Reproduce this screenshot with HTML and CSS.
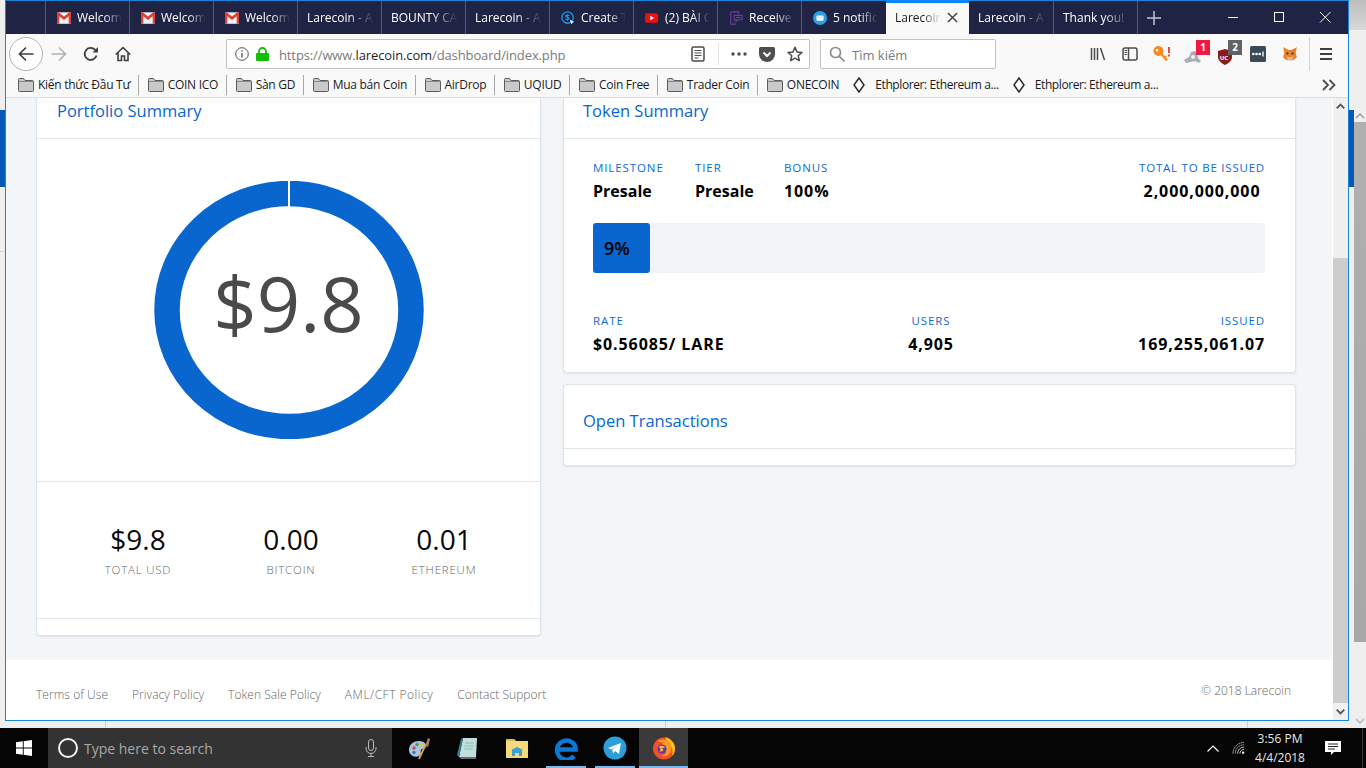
FILE: index.html
```html
<!DOCTYPE html>
<html lang="en">
<head>
<meta charset="utf-8">
<title>Larecoin</title>
<link rel="stylesheet" href="styles.css">
</head>
<body>
<svg class="defs" width="0" height="0" aria-hidden="true">
  <symbol id="folder" viewBox="0 0 16 14">
    <path d="M.5 3V1.500a1 1 0 0 1 1-1h4l1.500 2h7.500a1 1 0 0 1 1 1v9a1 1 0 0 1-1 1h-13a1 1 0 0 1-1-1z" fill="#c9c9c9" stroke="#5c5c5c"/>
    <path d="M1 3.500h14" stroke="#8a8a8a"/>
  </symbol>
  <symbol id="diamond" viewBox="0 0 12 16">
    <path d="M6 1l5 7-5 7-5-7z" fill="#fff" stroke="#2c2c2c" stroke-width="1.500"/>
  </symbol>
  <symbol id="gmail" viewBox="0 0 14 12">
    <rect width="14" height="11.500" y=".3" fill="#f1f1f1"/>
    <path d="M0 .3h1.800L7 4.600 12.200.3H14v11.500h-2.300V4.200L7 8 2.300 4.200v7.600H0z" fill="#d9443a"/>
  </symbol>
</svg>

<div class="desktop">
  <svg class="ghost-arrow ghost-up" viewBox="0 0 12 8"><path d="M2 6l4-4 4 4" fill="none" stroke="#9a9a9a" stroke-width="1.500"/></svg>
  <svg class="ghost-arrow ghost-down" viewBox="0 0 12 8"><path d="M2 2l4 4 4-4" fill="none" stroke="#b5b5b5" stroke-width="1.500"/></svg>
  <div class="window">
    <header class="tabbar">
      <div class="tab"><svg class="fav"><use href="#gmail"/></svg><span class="tab-label">Welcome</span></div>
      <div class="tab"><svg class="fav"><use href="#gmail"/></svg><span class="tab-label">Welcome</span></div>
      <div class="tab"><svg class="fav"><use href="#gmail"/></svg><span class="tab-label">Welcome</span></div>
      <div class="tab tab-plain"><span class="tab-label">Larecoin - A</span></div>
      <div class="tab tab-plain"><span class="tab-label">BOUNTY CA</span></div>
      <div class="tab tab-plain"><span class="tab-label">Larecoin - A</span></div>
      <div class="tab">
        <svg class="fav" viewBox="0 0 16 16"><circle cx="7.500" cy="7.500" r="6.500" fill="none" stroke="#1c97e8" stroke-width="1.500"/><text x="7.500" y="11" text-anchor="middle" class="fav-dollar">$</text><path d="M10 10l5 2.500-2 .8-.8 2z" fill="#fff"/></svg>
        <span class="tab-label">Create T</span>
      </div>
      <div class="tab">
        <svg class="fav" viewBox="0 0 16 16"><rect y="2.500" width="15" height="11" rx="2.500" fill="#ee0f0f"/><path d="M6 5.500l4.500 2.500L6 10.500z" fill="#fff"/></svg>
        <span class="tab-label">(2) BÀI G</span>
      </div>
      <div class="tab">
        <svg class="fav" viewBox="0 0 16 16" fill="none" stroke="#6b3fa0" stroke-width="1.300"><path d="M2 1h9v3M2 1v14h6M5 12.500h1"/><path d="M6 5h9v5h-5l-2 2v-2H6z"/><path d="M8 7.500h5"/></svg>
        <span class="tab-label">Receive</span>
      </div>
      <div class="tab">
        <svg class="fav" viewBox="0 0 16 16"><circle cx="8" cy="8" r="8" fill="#2b9fe3"/><rect x="4" y="5" width="8" height="6" rx="1" fill="#fff"/><path d="M4.500 5.800L8 8.300l3.500-2.500" fill="none" stroke="#8cc9ee" stroke-width=".8"/></svg>
        <span class="tab-label">5 notific</span>
      </div>
      <div class="tab tab-active">
        <span class="tab-label">Larecoin</span>
        <svg class="tab-close" viewBox="0 0 12 12"><path d="M1 1l10 10M11 1L1 11" stroke="#3d3d3d" stroke-width="1.500"/></svg>
      </div>
      <div class="tab tab-plain tab-next"><span class="tab-label">Larecoin - A</span></div>
      <div class="tab tab-plain"><span class="tab-label">Thank you! -</span></div>
      <div class="tab-end">
        <svg class="tab-plus" viewBox="0 0 14 14"><path d="M7 0v14M0 7h14" stroke="#c5c6d2" stroke-width="1.500"/></svg>
      </div>
      <div class="win-controls">
        <svg class="win-btn" viewBox="0 0 46 32"><path d="M18 16.500h10" stroke="#fff"/></svg>
        <svg class="win-btn" viewBox="0 0 46 32"><rect x="18.500" y="11.500" width="9" height="9" fill="none" stroke="#fff"/></svg>
        <svg class="win-btn" viewBox="0 0 46 32"><path d="M18 11l10.500 10.500M28.500 11L18 21.500" stroke="#fff"/></svg>
      </div>
    </header>

    <nav class="toolbar">
      <div class="back-btn">
        <svg class="ico16" viewBox="0 0 16 16" fill="none" stroke="#3e3e3e" stroke-width="1.700"><path d="M1.500 8h14M8 1.500L1.500 8 8 14.500"/></svg>
      </div>
      <div class="slot"><svg class="ico16" viewBox="0 0 16 16" fill="none" stroke="#b3b3b3" stroke-width="1.700"><path d="M14.500 8H.5M8 1.500L14.500 8 8 14.500"/></svg></div>
      <div class="slot"><svg class="ico16" viewBox="0 0 16 16" fill="none" stroke="#3e3e3e" stroke-width="1.800"><path d="M13.500 9.500A6 6 0 1 1 12 3.700L14 5.500"/><path d="M15 1v5.500H9.500z" fill="#3e3e3e" stroke="none"/></svg></div>
      <div class="slot"><svg class="ico16" viewBox="0 0 16 16" fill="none" stroke="#3e3e3e" stroke-width="1.600"><path d="M.8 8.500L8 1.500l7.200 7M3 7v7.500h3.500V10h3v4.500H13V7"/></svg></div>

      <div class="urlbar">
        <svg class="url-info" viewBox="0 0 14 14" fill="none" stroke="#555"><circle cx="7" cy="7" r="6.300"/><path d="M7 6v4.500M7 3.300v1.400" stroke-width="1.300"/></svg>
        <svg class="url-lock" viewBox="0 0 13 14"><path d="M3 6.500V4.500a3.500 3.500 0 0 1 7 0v2" fill="none" stroke="#12bc00" stroke-width="1.800"/><rect y="6" width="13" height="8" rx="1" fill="#12bc00"/></svg>
        <span class="url-text">https://www.<b class="url-host">larecoin.com</b>/dashboard/index.php</span>
        <svg class="url-reader" viewBox="0 0 14 16" fill="none" stroke="#4b4b4b"><rect x="1" y="1" width="12" height="14" rx="1.500" stroke-width="1.500"/><path d="M3.500 4.500h7M3.500 7h7M3.500 9.500h7M3.500 12h4"/></svg>
        <span class="url-sep"></span>
        <svg class="url-dots" viewBox="0 0 16 4"><circle cx="2" cy="2" r="1.700" fill="#4b4b4b"/><circle cx="8" cy="2" r="1.700" fill="#4b4b4b"/><circle cx="14" cy="2" r="1.700" fill="#4b4b4b"/></svg>
        <svg class="url-pocket" viewBox="0 0 16 15"><path d="M1.500 0h13A1.500 1.500 0 0 1 16 1.500V7A8 8 0 0 1 0 7V1.500A1.500 1.500 0 0 1 1.500 0z" fill="#4f4f4f"/><path d="M4.500 5.500L8 9l3.500-3.500" fill="none" stroke="#f9f9fa" stroke-width="2"/></svg>
        <svg class="url-star" viewBox="0 0 16 16"><path d="M8 1.300l2 4.600 5 .5-3.800 3.300 1.100 4.900L8 12.100l-4.300 2.500 1.100-4.900L1 6.400l5-.5z" fill="none" stroke="#4b4b4b" stroke-width="1.500" stroke-linejoin="round"/></svg>
      </div>

      <div class="searchbar">
        <svg class="search-ico" viewBox="0 0 16 16" fill="none" stroke="#8c8c8c" stroke-width="1.700"><circle cx="6.500" cy="6.500" r="5"/><path d="M10.300 10.300L15.500 15.500"/></svg>
        <span class="search-text">Tìm kiếm</span>
      </div>

      <div class="slot slot-first"><svg class="ico16" viewBox="0 0 16 16" fill="none" stroke="#4b4b4b" stroke-width="1.500"><path d="M1.500 2v12M4.500 2v12M7.500 2v12M10.500 2l4 12"/></svg></div>
      <div class="slot"><svg class="ico16" viewBox="0 0 16 14" fill="none" stroke="#4b4b4b" stroke-width="1.500"><rect x="1" y="1" width="14" height="12" rx="2"/><path d="M6.500 1v12"/><path d="M2.500 3.500h2.500M2.500 5.500h2.500M2.500 7.500h2.500" stroke-width="1"/></svg></div>
      <div class="slot"><svg class="ico18" viewBox="0 0 18 18"><path fill-rule="evenodd" d="M5.500 1a5 5 0 1 1-.1 10 5 5 0 0 1 .1-10zM4 4a1.300 1.300 0 1 0 .1 2.600A1.300 1.300 0 0 0 4 4z" fill="#f68a1e"/><path d="M8 8.500l6 7" stroke="#f68a1e" stroke-width="2.400"/><path d="M11.500 12.500l2-1.500" stroke="#f68a1e" stroke-width="1.500"/><path d="M16 2v6M16 9.500v2" stroke="#e0312a" stroke-width="1.700"/></svg></div>
      <div class="slot">
        <svg class="ico-addon" viewBox="0 0 18 14" fill="#a7adb8"><path d="M0 10l5-3 2-5 4-1 2 2 1 5 3 3-2 2-4-2-4 1-5 1z"/><circle cx="9" cy="7" r="2" fill="#f0f0f0"/></svg>
        <span class="badge badge-red">1</span>
      </div>
      <div class="slot">
        <svg class="ico-shield" viewBox="0 0 14 16"><path d="M7 0l7 2v6c0 3.500-3 6-7 8-4-2-7-4.500-7-8V2z" fill="#8b1a1a"/><text x="6" y="10.500" text-anchor="middle" class="ub-text">UC</text></svg>
        <span class="badge badge-gray">2</span>
      </div>
      <div class="slot"><svg class="ico16" viewBox="0 0 16 16"><rect width="16" height="16" rx="1.500" fill="#3b4a56"/><circle cx="3.300" cy="8" r="1.300" fill="#fff"/><circle cx="6.500" cy="8" r="1.300" fill="#fff"/><circle cx="9.700" cy="8" r="1.300" fill="#fff"/><path d="M13 5.500v5" stroke="#fff" stroke-width="1.300"/></svg></div>
      <div class="slot"><svg class="ico16" viewBox="0 0 14 14"><path d="M1 1l5 2.500h2L13 1l-1 5 1 4-3 2.500H4L1 10l1-4z" fill="#e8832a"/><path d="M4 9l3 1 3-1-1 3H5z" fill="#d7c1b3"/><circle cx="4.800" cy="6.500" r=".9" fill="#3a2a20"/><circle cx="9.200" cy="6.500" r=".9" fill="#3a2a20"/></svg></div>
      <span class="tool-sep"></span>
      <div class="slot"><svg class="ico16" viewBox="0 0 16 16"><path d="M2 3h12M2 8h12M2 13h12" stroke="#3e3e3e" stroke-width="1.800"/></svg></div>
    </nav>

    <div class="bookmarks">
      <a class="bm bm-sep"><svg class="bm-folder"><use href="#folder"/></svg>Kiến thức Đầu Tư</a>
      <a class="bm bm-sep"><svg class="bm-folder"><use href="#folder"/></svg>COIN ICO</a>
      <a class="bm bm-sep"><svg class="bm-folder"><use href="#folder"/></svg>Sàn GD</a>
      <a class="bm bm-sep"><svg class="bm-folder"><use href="#folder"/></svg>Mua bán Coin</a>
      <a class="bm bm-sep"><svg class="bm-folder"><use href="#folder"/></svg>AirDrop</a>
      <a class="bm bm-sep"><svg class="bm-folder"><use href="#folder"/></svg>UQIUD</a>
      <a class="bm bm-sep"><svg class="bm-folder"><use href="#folder"/></svg>Coin Free</a>
      <a class="bm bm-sep"><svg class="bm-folder"><use href="#folder"/></svg>Trader Coin</a>
      <a class="bm"><svg class="bm-folder"><use href="#folder"/></svg>ONECOIN</a>
      <a class="bm bm-eth"><svg class="bm-diamond"><use href="#diamond"/></svg>Ethplorer: Ethereum a...</a>
      <a class="bm bm-eth"><svg class="bm-diamond"><use href="#diamond"/></svg>Ethplorer: Ethereum a...</a>
      <svg class="bm-more" viewBox="0 0 14 12" fill="none" stroke="#4b4b4b" stroke-width="1.800"><path d="M1 1l5 5-5 5M7.500 1l5 5-5 5"/></svg>
    </div>

    <div class="viewport">
      <div class="page">
        <main class="content">
          <section class="card card-left">
            <h2 class="card-title">Portfolio Summary</h2>
            <div class="donut-wrap">
              <svg class="donut" viewBox="0 0 270 258">
                <ellipse cx="135" cy="129" rx="122" ry="116.500" fill="none" stroke="#0866ce" stroke-width="25.500"/>
                <rect x="134" y="0" width="2" height="27" fill="#fff"/>
              </svg>
              <div class="donut-value">$9.8</div>
            </div>
            <div class="stats">
              <div class="stat"><div class="stat-num">$9.8</div><div class="stat-label">TOTAL USD</div></div>
              <div class="stat"><div class="stat-num">0.00</div><div class="stat-label">BITCOIN</div></div>
              <div class="stat"><div class="stat-num">0.01</div><div class="stat-label">ETHEREUM</div></div>
            </div>
            <div class="card-foot"></div>
          </section>

          <div class="col-right">
            <section class="card">
              <h2 class="card-title">Token Summary</h2>
              <div class="token-body">
                <div class="row-top">
                  <div class="field f-milestone"><div class="lbl">MILESTONE</div><div class="val">Presale</div></div>
                  <div class="field f-tier"><div class="lbl">TIER</div><div class="val">Presale</div></div>
                  <div class="field"><div class="lbl">BONUS</div><div class="val val-num">100%</div></div>
                  <div class="field f-total"><div class="lbl">TOTAL TO BE ISSUED</div><div class="val val-num">2,000,000,000</div></div>
                </div>
                <div class="progress"><div class="progress-fill">9%</div></div>
                <div class="row-bottom">
                  <div class="field"><div class="lbl">RATE</div><div class="val val-num">$0.56085/ LARE</div></div>
                  <div class="field f-users"><div class="lbl">USERS</div><div class="val val-num">4,905</div></div>
                  <div class="field f-issued"><div class="lbl">ISSUED</div><div class="val val-num">169,255,061.07</div></div>
                </div>
              </div>
            </section>
            <section class="card card-open">
              <h2 class="card-title card-title-open">Open Transactions</h2>
              <div class="card-foot"></div>
            </section>
          </div>
        </main>
        <footer class="site-foot">
          <div class="foot-links">
            <a>Terms of Use</a><a>Privacy Policy</a><a>Token Sale Policy</a><a class="foot-aml">AML/CFT Policy</a><a>Contact Support</a>
          </div>
          <div class="foot-copy">© 2018 Larecoin</div>
        </footer>
      </div>
      <div class="scrollbar">
        <svg class="sb-arrow" viewBox="0 0 16 16"><path d="M4 10l4-4 4 4" fill="none" stroke="#555" stroke-width="2"/></svg>
        <div class="sb-gap"></div>
        <div class="sb-thumb"></div>
        <svg class="sb-arrow" viewBox="0 0 16 16"><path d="M4 6l4 4 4-4" fill="none" stroke="#555" stroke-width="2"/></svg>
      </div>
    </div>
  </div>

  <div class="taskbar">
    <div class="start">
      <svg class="win-logo" viewBox="0 0 16 16"><path d="M0 2.300l6.800-1v6.300H0zM7.700 1.200L16 0v7.600H7.700zM0 8.400h6.800v6.300l-6.800-1zM7.700 8.400H16V16l-8.300-1.200z" fill="#fff"/></svg>
    </div>
    <div class="tb-search">
      <span class="cortana"></span>
      <span class="tb-search-text">Type here to search</span>
      <svg class="tb-mic" viewBox="0 0 12 18" fill="none" stroke="#bbb"><rect x="3.500" y=".5" width="5" height="11" rx="2.500"/><path d="M1 8v1.500a5 5 0 0 0 10 0V8M6 14.500V17M3 17.500h6"/></svg>
    </div>
    <div class="tb-app">
      <svg class="tb-ico" viewBox="0 0 24 24"><path d="M2 14c0-6 5-9 10-9 5 0 8 3 7 6-1 2-4 1-5 3s1 4-2 6c-5 2-10-1-10-6z" fill="#a9c6de"/><circle cx="7" cy="12" r="1.700" fill="#d9443a"/><circle cx="10" cy="8.500" r="1.700" fill="#3fa34d"/><circle cx="14.500" cy="8.500" r="1.700" fill="#e8c32a"/><circle cx="7" cy="16.500" r="1.700" fill="#3c78d8"/><path d="M12 23l6-13" stroke="#e2a24a" stroke-width="1.800"/><path d="M18 10l3-8 2 1-2 8z" fill="#b5804a"/></svg>
    </div>
    <div class="tb-app">
      <svg class="tb-ico" viewBox="0 0 24 24"><path d="M7 2h14l-1 19H3z" fill="#bfe0dc"/><path d="M7 2L3 21l-2-2L5 3z" fill="#3b7f86"/><path d="M20 21h-17l2 2h15z" fill="#6d6d6d"/><path d="M9 7h9M8.500 10h9M8 13h9" stroke="#8fbab6"/></svg>
    </div>
    <div class="tb-app">
      <svg class="tb-ico" viewBox="0 0 24 24"><path d="M1 3h8l2 2h12v17H1z" fill="#f6d978"/><path d="M1 3h8l1 2H1z" fill="#e3b94c"/><path d="M7 20v-6h10v6h-3v-3h-4v3z" fill="#3aa0e0"/><path d="M6 14l6-3 6 3z" fill="#3aa0e0"/></svg>
    </div>
    <div class="tb-app tb-open">
      <svg class="tb-ico" viewBox="0 0 24 24" fill="none"><path d="M4 13.500h17.500V11A9.500 9.500 0 1 0 20 20" stroke="#0a78d7" stroke-width="4.500"/></svg>
    </div>
    <div class="tb-app tb-open">
      <svg class="tb-ico" viewBox="0 0 24 24"><circle cx="12" cy="12" r="11.500" fill="#2a9fd9"/><path d="M5 12l13-5-2 11-4-3-2 2.500-.6-4L16 9l-7.500 4.500z" fill="#fff"/></svg>
    </div>
    <div class="tb-app tb-active">
      <svg class="tb-ico" viewBox="0 0 24 24"><circle cx="12" cy="12.500" r="11" fill="#f2502a"/><path d="M13 1c6 2 10 6 10 11.500 0 3-1 5.500-3 7.500 1-3 1-7-1-10-1.500-2.500-4-5-6-9z" fill="#ffc21c"/><path d="M6 5c5-3 11-1 13 4 1 3 0 8-3 10-2 1.500-5 1.500-7 .5 3 0 6-2 5-5-1-2-3-2-5-2 0-3 1-5 3-6-2 0-4 0-6-1.500z" fill="#ff9a1f"/><circle cx="10" cy="13" r="4.500" fill="#5a35b5"/><path d="M7 10.500c2-1 5-1 6 1l-3 .8 1.500 2c-1 1.500-3 1.700-4.500.7 1.500 0 2-1.500 1-2.500z" fill="#ffb52c"/></svg>
    </div>
    <div class="tray">
      <svg class="tray-chev" viewBox="0 0 12 7"><path d="M.5 6.500L6 1l5.500 5.500" fill="none" stroke="#fff" stroke-width="1.200"/></svg>
      <svg class="tray-wifi" viewBox="0 0 14 14" fill="none" stroke="#d0d0d0"><path d="M1 13A12 12 0 0 1 13 1M3.500 13A9.500 9.500 0 0 1 13 3.500" stroke-dasharray="1.500 .7"/><path d="M6 13a7 7 0 0 1 7-7M8.500 13A4.500 4.500 0 0 1 13 8.500"/><circle cx="12" cy="12" r="1.300" fill="#fff" stroke="none"/></svg>
      <div class="clock"><div>3:56 PM</div><div>4/4/2018</div></div>
      <svg class="tray-note" viewBox="0 0 16 15"><path d="M0 0h16v11h-7l-3 3v-3H0z" fill="#fff"/><path d="M3 3h10M3 5.500h10M3 8h7" stroke="#222"/></svg>
      <span class="tray-edge"></span>
    </div>
  </div>
</div>
</body>
</html>
```

FILE: styles.css
```css
* { box-sizing: border-box; }
html, body { margin: 0; padding: 0; height: 100%; overflow: hidden; }
body { font-family: "Open Sans", "Noto Sans", sans-serif; color: #000; }
.defs { display: block; height: 0; }
a { color: inherit; text-decoration: none; }

/* desktop: what shows around the browser window */
.desktop {
  position: relative;
  width: 1366px; height: 768px;
  display: flex; flex-direction: column;
  padding: 0 17px 0 5px;
  background-color: #efefef;
  background-image:
    linear-gradient(#0659b3, #0659b3),
    linear-gradient(#0659b3, #0659b3),
    linear-gradient(#b0b0b0, #a8a8a8),
    linear-gradient(#bdbdbd, #d8d8d8),
    linear-gradient(#d6d6d6, #d6d6d6),
    linear-gradient(#d0d0d0, #d0d0d0),
    linear-gradient(#d0d0d0, #d0d0d0),
    linear-gradient(#d0d0d0, #d0d0d0);
  background-repeat: no-repeat;
  background-size: 5px 77px, 5px 77px, 12px 520px, 17px 30px, 5px 1px, 1px 7px, 1px 7px, 1px 7px;
  background-position: 0 110px, 1349px 110px, 1354px 122px, 1349px 0, 0 251px, 105px 721px, 665px 721px, 1247px 721px;
}
.ghost-arrow { position: absolute; left: 1354px; width: 12px; height: 8px; }
.ghost-up { top: 112px; }
.ghost-down { top: 717px; }

.window {
  height: 721px;
  border: 1px solid #1a84d8;
  display: flex; flex-direction: column;
  background: #f9f9fa;
  margin-bottom: 7px;
  flex: none;
}

/* tab strip */
.tabbar {
  height: 33px; flex: none;
  display: flex;
  background: #1f2344;
  padding-left: 39px;
  color: #fff;
  font-size: 12px;
}
.tab {
  width: 84px;
  display: flex; align-items: center; gap: 6px;
  padding: 0 7px 0 11px;
  border-left: 1px solid #565a77;
}
.tab-plain { padding-left: 9px; }
.fav { width: 14px; height: 14px; flex: none; }
.fav-dollar { font: 700 10px "Open Sans", sans-serif; fill: #1c97e8; }
.tab-label {
  flex: 1; min-width: 0;
  white-space: nowrap; overflow: hidden;
  -webkit-mask-image: linear-gradient(90deg, #000 60%, transparent 100%);
  mask-image: linear-gradient(90deg, #000 60%, transparent 100%);
}
.tab-active {
  width: 83px;
  margin: -1px 0 0 1px;
  background: #f9f9fa; color: #1a1a1a;
  border-left: 0; border-top: 3px solid #0a84ff;
  padding: 0 11px 3px 9px;
}
.tab-next { border-left: 0; }
.tab-close { width: 11px; height: 11px; flex: none; }
.tab-end {
  width: 46px; flex: none;
  display: flex; align-items: center; justify-content: center;
  border-left: 1px solid #565a77;
  padding-right: 13px;
}
.tab-plus { width: 14px; height: 14px; }
.win-controls { margin-left: auto; display: flex; }
.win-btn { width: 46px; height: 32px; display: block; }

/* nav toolbar */
.toolbar {
  height: 38px; flex: none;
  display: flex; align-items: center;
  padding: 2px 3px 0 3px;
  background: #f9f9fa;
}
.back-btn {
  width: 34px; height: 34px; flex: none;
  border: 1px solid #b3b3b3; border-radius: 50%;
  background: #fff;
  display: flex; align-items: center; justify-content: center;
}
.slot {
  width: 32px; height: 32px; flex: none;
  display: flex; align-items: center; justify-content: center;
  position: relative;
}
.ico16 { width: 16px; height: 16px; }
.ico18 { width: 18px; height: 18px; }
.ico-addon { width: 18px; height: 14px; margin: 6px 2px 0 0; }
.ico-shield { width: 14px; height: 16px; margin: 6px 3px 0 0; }
.slot-first { margin-left: 86px; }
.badge {
  position: absolute; top: 2px; left: 18px;
  width: 14px; height: 15px;
  font-size: 10px; font-weight: 700; line-height: 15px; text-align: center;
  color: #fff;
}
.badge-red { background: #f0193f; }
.badge-gray { background: #5f6368; }
.ub-text { font: 700 6px "Open Sans", sans-serif; fill: #fff; }
.tool-sep { width: 1px; height: 34px; background: #d4d4d6; margin-left: 3px; flex: none; }

.urlbar, .searchbar {
  height: 30px; flex: none;
  background: #fff;
  border: 1px solid #c2c2c4; border-radius: 2px;
  display: flex; align-items: center;
}
.urlbar { width: 584px; margin-left: 87px; padding-left: 8px; }
.url-info { width: 14px; height: 14px; flex: none; }
.url-lock { width: 13px; height: 14px; flex: none; margin-left: 7px; }
.url-text {
  margin-left: 10px; padding-top: 1px;
  font-size: 13px; color: #7b7b7b; white-space: nowrap;
  letter-spacing: -.12px; flex: 1;
}
.url-host { font-weight: 400; color: #1f1f1f; }
.url-reader { width: 14px; height: 16px; flex: none; margin-right: 13px; }
.url-sep { width: 1px; height: 22px; background: #e0e0e0; flex: none; }
.url-dots { width: 16px; height: 4px; flex: none; margin-left: 12px; }
.url-pocket { width: 16px; height: 15px; flex: none; margin-left: 12px; }
.url-star { width: 16px; height: 16px; flex: none; margin: 0 6px 0 12px; }
.searchbar { width: 176px; margin-left: 10px; padding-left: 8px; }
.search-ico { width: 16px; height: 16px; flex: none; }
.search-text { margin-left: 7px; padding-top: 1px; font-size: 13px; color: #7b7b7b; }

/* bookmarks */
.bookmarks {
  height: 26px; flex: none;
  display: flex; align-items: center;
  padding: 0 0 0 12px;
  font-size: 12px; color: #1a1a1a;
  border-bottom: 1px solid #dcdcde;
  letter-spacing: -.27px;
  white-space: nowrap;
}
.bm { display: flex; align-items: center; gap: 4px; }
.bm-sep { padding-right: 8px; border-right: 1px solid #a8a8a8; margin-right: 8.500px; height: 20px; }
.bm-folder { width: 16px; height: 14px; flex: none; }
.bm-diamond { width: 12px; height: 16px; flex: none; }
.bm-eth { margin-left: 14px; gap: 10px; letter-spacing: -.4px; }
.bm-more { width: 14px; height: 12px; margin-left: auto; margin-right: 12px; }

/* page */
.viewport { flex: 1; min-height: 0; display: flex; }
.page { flex: 1; min-width: 0; display: flex; flex-direction: column; background: #f3f6f9; }
.content {
  flex: 1; min-height: 0;
  display: flex; align-items: flex-start; gap: 22px;
  padding-left: 30px;
}
.card {
  background: #fff;
  border: solid #dfe3ea; border-width: 0 1px 1px 1px;
  border-radius: 0 0 4px 4px;
  box-shadow: 0 1px 2px rgba(90, 100, 120, .12);
}
.card-left { width: 505px; }
.col-right { width: 733px; display: flex; flex-direction: column; gap: 11px; }
.card-title {
  margin: 0;
  height: 41px;
  padding: 0 0 15px 20px;
  display: flex; align-items: flex-end;
  font-size: 16.500px; font-weight: 400; line-height: 24px;
  color: #0866ce;
  border-bottom: 1px solid #dfe3ea;
}
.col-right .card-title { padding-left: 19px; }
.card-open { border-width: 1px; border-radius: 4px; }
.col-right .card-title-open { height: 64px; padding-bottom: 15px; }
.card-foot { height: 16px; }

.donut-wrap {
  height: 343px;
  display: grid; place-items: center;
  border-bottom: 1px solid #dfe3ea;
}
.donut { grid-area: 1 / 1; width: 270px; height: 258px; }
.donut-value {
  grid-area: 1 / 1;
  font-size: 76px; font-weight: 400; color: #4a4a4a; line-height: 1;
  padding-bottom: 14px;
}
.stats {
  height: 137px;
  display: grid; grid-template-columns: repeat(3, 153px);
  justify-content: center;
  padding: 38px 0 0 5px;
  border-bottom: 1px solid #dfe3ea;
}
.stat { text-align: center; }
.stat-num { font-size: 28px; line-height: 38px; color: #0a0a0a; }
.stat-label { font-size: 11.500px; font-weight: 300; letter-spacing: .8px; color: #666; line-height: 16px; margin-top: 4px; }

.token-body { padding: 21px 30px 17px 29px; height: 233px; }
.row-top { display: flex; }
.row-bottom { display: grid; grid-template-columns: 1fr auto 1fr; margin-top: 40px; }
.field { min-width: 0; }
.lbl { font-size: 11.500px; line-height: 16px; letter-spacing: .9px; color: #0d6bd6; white-space: nowrap; }
.val { font-size: 16px; font-weight: 700; line-height: 22px; margin-top: 4px; white-space: nowrap; }
.val-num { letter-spacing: .9px; }
.f-milestone { width: 102px; }
.f-tier { width: 89px; }
.f-total { margin-left: auto; text-align: center; }
.f-total .lbl { letter-spacing: .78px; }
.f-users { text-align: center; padding-left: 4px; }
.f-issued { text-align: right; }
.progress {
  margin-top: 21px; height: 50px;
  background: #f1f3f8; border-radius: 3px;
}
.progress-fill {
  width: 57px; height: 50px;
  background: #0866ce; border-radius: 3px;
  display: flex; align-items: center;
  padding-left: 11px;
  font-size: 18px; font-weight: 600;
}

.site-foot {
  height: 60px; flex: none;
  background: #fff;
  display: flex; justify-content: space-between; align-items: flex-start;
  padding: 0 41px 0 30px;
  font-size: 12px; font-weight: 300; color: #666;
}
.foot-links { display: flex; gap: 24px; padding-top: 26px; letter-spacing: .05px; }
.foot-aml { letter-spacing: .5px; }
.foot-copy { padding-top: 22px; }

.scrollbar {
  width: 16px; flex: none;
  display: flex; flex-direction: column;
  background: #f0f0f0;
  border-left: 1px solid #fff;
}
.sb-arrow { width: 15px; height: 17px; flex: none; }
.sb-gap { height: 143px; flex: none; }
.sb-thumb { flex: 1; background: #cdcdcd; }

/* taskbar */
.taskbar {
  height: 40px; flex: none;
  margin: 0 -17px 0 -5px;
  background: #050505;
  display: flex; align-items: center;
  color: #fff;
}
.start { width: 48px; height: 40px; flex: none; display: flex; align-items: center; justify-content: center; }
.win-logo { width: 16px; height: 16px; }
.tb-search {
  width: 344px; height: 40px; flex: none;
  background: #333;
  display: flex; align-items: center;
  padding-left: 10px;
  margin-right: 2px;
}
.cortana { width: 20px; height: 20px; border: 2.500px solid #f2f2f2; border-radius: 50%; flex: none; }
.tb-search-text { margin-left: 6px; font-size: 14px; color: #a8a8a8; flex: 1; white-space: nowrap; }
.tb-mic { width: 12px; height: 18px; flex: none; margin-right: 15px; }
.tb-app {
  width: 49px; height: 40px; flex: none;
  display: flex; align-items: center; justify-content: center;
  position: relative;
}
.tb-ico { width: 24px; height: 24px; }
.tb-open::after, .tb-active::after {
  content: ""; position: absolute; bottom: 0; height: 2px; background: #76b9ed;
}
.tb-open::after { left: 5px; right: 4px; }
.tb-active { background: #3a3a3a; }
.tb-active::after { left: 0; right: 0; }
.tray {
  margin-left: auto;
  display: flex; align-items: center;
  padding-right: 3px;
  height: 40px;
}
.tray-chev { width: 12px; height: 7px; flex: none; }
.tray-wifi { width: 13px; height: 14px; margin-left: 13px; flex: none; }
.clock { width: 66px; margin-left: 2px; font-size: 12px; line-height: 19px; text-align: center; color: #e8e8e8; flex: none; }
.tray-note { width: 16px; height: 15px; margin-left: 12px; flex: none; }
.tray-edge { width: 1px; height: 40px; margin-left: 21px; background: #3c3c3c; flex: none; }
```
